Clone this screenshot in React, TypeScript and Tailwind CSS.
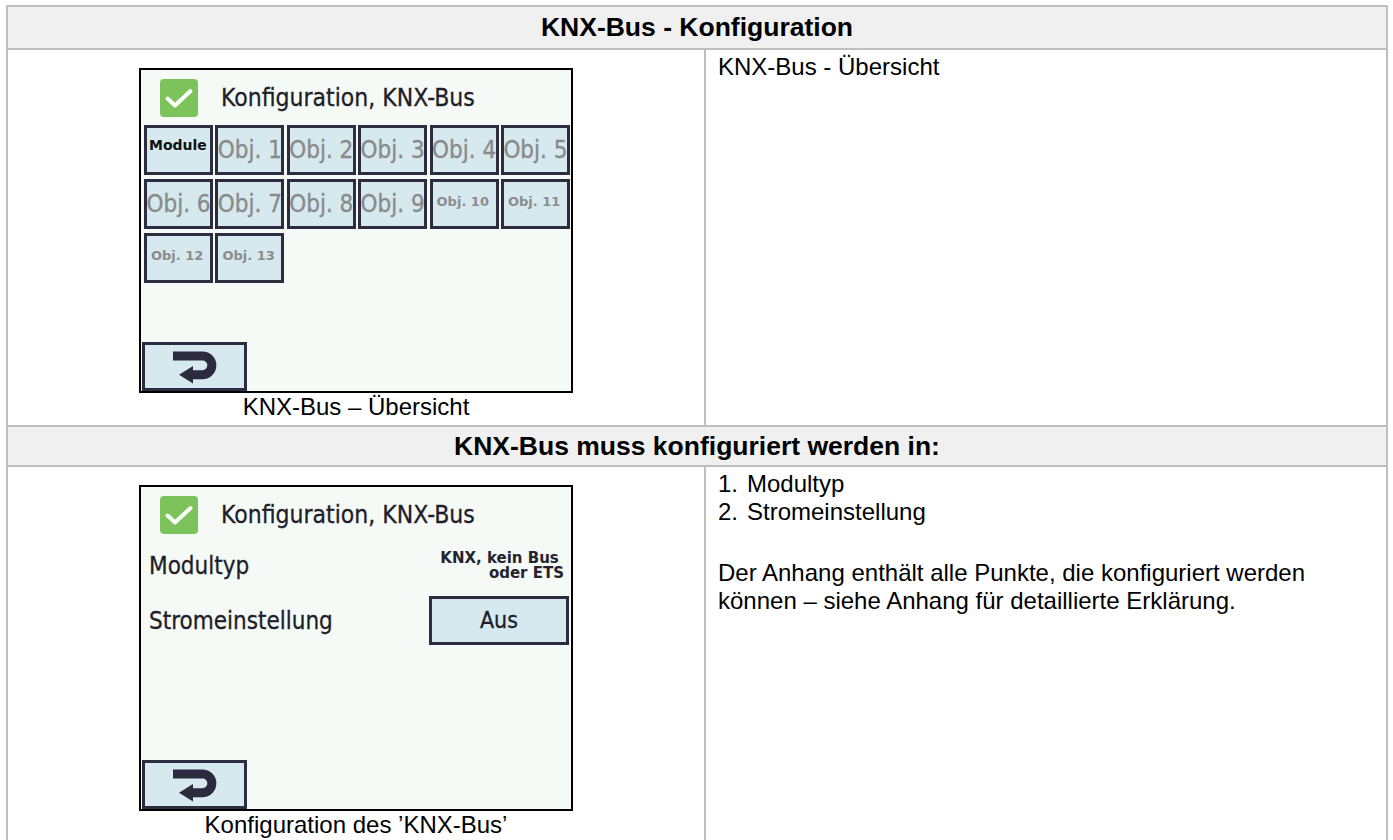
import React from 'react';

const SCREEN_FONT =
  "font-['DejaVu_Sans_Condensed','DejaVu_Sans',sans-serif] font-stretch-condensed [-webkit-text-stroke:0.3px_currentColor]";
const SMALL_FONT = "font-['DejaVu_Sans',sans-serif] font-stretch-normal font-bold [-webkit-text-stroke:0px]";

function Check() {
  return (
    <svg width="38" height="38" viewBox="0 0 38 38" className="shrink-0">
      <rect x="0" y="0" width="38" height="38" rx="4" fill="#7bc35a" />
      <path d="M7.5 19.5 L15 26.5 L30.5 12" fill="none" stroke="#ffffff" strokeWidth="4" strokeLinecap="round" strokeLinejoin="round" />
    </svg>
  );
}

function ReturnIcon() {
  return (
    <svg width="46" height="36" viewBox="0 0 46 36">
      <path d="M1 7 H30.5 A9.35 9.35 0 0 1 30.5 25.7 H20" fill="none" stroke="#2c2a3e" strokeWidth="9" />
      <polygon points="7,25.7 21,17 21,34.4" fill="#2c2a3e" />
    </svg>
  );
}

function BackButton() {
  return (
    <div className="w-[105px] h-[49px] border-[3px] border-[#2e2c40] bg-[#d5e9ef] flex items-center justify-center">
      <ReturnIcon />
    </div>
  );
}

function ScreenHeader() {
  return (
    <div className="flex items-center pt-[9px] pl-[19px]">
      <Check />
      <span className="ml-[23px] text-[24.5px] leading-none text-[#1f1e2a] whitespace-nowrap">Konfiguration, KNX-Bus</span>
    </div>
  );
}

type Cell = { t: string; kind: 'mod' | 'big' | 'small' };

const cells: Cell[] = [
  { t: 'Module', kind: 'mod' },
  { t: 'Obj. 1', kind: 'big' },
  { t: 'Obj. 2', kind: 'big' },
  { t: 'Obj. 3', kind: 'big' },
  { t: 'Obj. 4', kind: 'big' },
  { t: 'Obj. 5', kind: 'big' },
  { t: 'Obj. 6', kind: 'big' },
  { t: 'Obj. 7', kind: 'big' },
  { t: 'Obj. 8', kind: 'big' },
  { t: 'Obj. 9', kind: 'big' },
  { t: 'Obj. 10', kind: 'small' },
  { t: 'Obj. 11', kind: 'small' },
  { t: 'Obj. 12', kind: 'small' },
  { t: 'Obj. 13', kind: 'small' },
];

function GridButton({ c }: { c: Cell }) {
  const base = 'w-[69px] h-[50px] border-[3px] border-[#2e2c40] bg-[#d5e9ef] overflow-hidden whitespace-nowrap';
  if (c.kind === 'mod') {
    return (
      <div className={base + ' pt-[5px] pl-[2px]'}>
        <span className={SMALL_FONT + ' text-[14px] leading-none text-[#111111]'}>{c.t}</span>
      </div>
    );
  }
  if (c.kind === 'small') {
    return (
      <div className={base + ' pt-[7px] pl-[4px]'}>
        <span className={SMALL_FONT + ' text-[13px] leading-none text-[#8c8c8c]'}>{c.t}</span>
      </div>
    );
  }
  return (
    <div className={base + ' flex items-center justify-center'}>
      <span className="text-[24px] leading-none text-[#8a8a8a]">{c.t}</span>
    </div>
  );
}

function ScreenOverview() {
  return (
    <div className={'w-[434px] h-[325px] border-2 border-black bg-[#f5faf7] flex flex-col ' + SCREEN_FONT}>
      <ScreenHeader />
      <div className="grid grid-cols-[repeat(6,69px)] gap-x-[2.4px] gap-y-[4px] mt-[8px] ml-[3px]">
        {cells.map((c) => (
          <GridButton key={c.t} c={c} />
        ))}
      </div>
      <div className="mt-auto ml-[1px]">
        <BackButton />
      </div>
    </div>
  );
}

function ScreenConfig() {
  return (
    <div className={'w-[434px] h-[326px] border-2 border-black bg-[#f5faf7] flex flex-col ' + SCREEN_FONT}>
      <ScreenHeader />
      <div className="flex items-center justify-between h-[30px] mt-[17px] pl-[8px] pr-[2px] text-[#1f1e2a]">
        <span className="text-[24px] leading-none">Modultyp</span>
        <span className={SMALL_FONT + ' mr-[5px] text-[15px] leading-[15px] text-right whitespace-pre text-[#24232e]'}>
          {'KNX, kein Bus \noder ETS'}
        </span>
      </div>
      <div className="flex items-center justify-between mt-[15px] pl-[8px] pr-[2px] text-[#1f1e2a]">
        <span className="text-[24px] leading-none">Stromeinstellung</span>
        <div className="w-[140px] h-[49px] border-[3px] border-[#2e2c40] bg-[#d5e9ef] flex items-center justify-center">
          <span className="text-[23px] leading-none">Aus</span>
        </div>
      </div>
      <div className="mt-auto ml-[1px]">
        <BackButton />
      </div>
    </div>
  );
}

export default function App() {
  return (
    <div className="min-h-[840px] bg-white pt-[5px] pl-[6px] font-['Liberation_Sans',Arial,sans-serif] text-black">
      <div className="w-[1382px] border-2 border-[#bfbfbf]">
        <div className="h-[41px] bg-[#f0f0f0] flex items-center justify-center text-[26.5px] font-bold leading-none">
          KNX-Bus - Konfiguration
        </div>
        <div className="flex border-t-2 border-[#bfbfbf]">
          <div className="w-[698px] shrink-0 border-r-2 border-[#bfbfbf] flex flex-col items-center pt-[18px] pb-[4px]">
            <ScreenOverview />
            <div className="text-[24px] leading-[28px]">KNX-Bus – Übersicht</div>
          </div>
          <div className="flex-1 pl-[12px] pt-[3px] text-[24px] leading-[27.6px]">KNX-Bus - Übersicht</div>
        </div>
        <div className="h-[40px] bg-[#f0f0f0] border-t-2 border-[#bfbfbf] flex items-center justify-center text-[26.5px] font-bold leading-none">
          KNX-Bus muss konfiguriert werden in:
        </div>
        <div className="flex border-t-2 border-[#bfbfbf]">
          <div className="w-[698px] shrink-0 border-r-2 border-[#bfbfbf] flex flex-col items-center pt-[18px] pb-[4px]">
            <ScreenConfig />
            <div className="text-[24px] leading-[28px]">Konfiguration des ’KNX-Bus’</div>
          </div>
          <div className="flex-1 pl-[12px] pt-[3px] pr-[4px] text-[24px] leading-[27.6px]">
            <div className="flex">
              <span className="w-[29px] shrink-0">1.</span>
              <span>Modultyp</span>
            </div>
            <div className="flex">
              <span className="w-[29px] shrink-0">2.</span>
              <span>Stromeinstellung</span>
            </div>
            <div className="h-[34px]" />
            <p>
              Der Anhang enthält alle Punkte, die konfiguriert werden können – siehe Anhang für detaillierte Erklärung.
            </p>
          </div>
        </div>
      </div>
    </div>
  );
}
